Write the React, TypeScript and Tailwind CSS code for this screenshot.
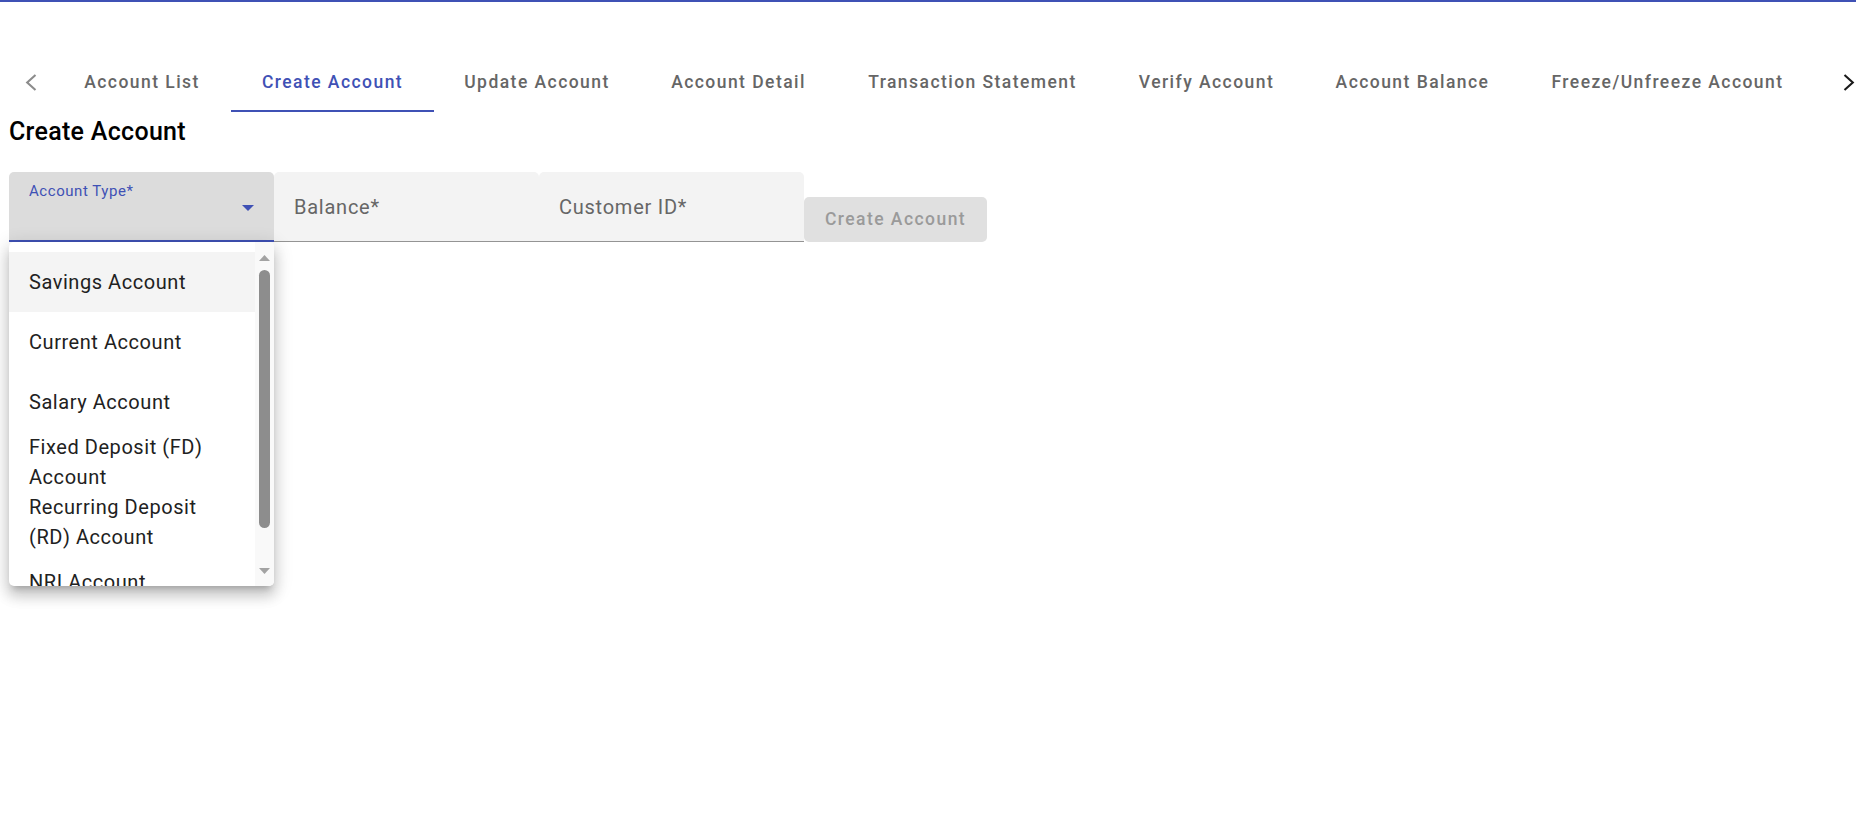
import React from "react";

const tabs = [
  { label: "Account List", cls: "w-[178px]" },
  { label: "Create Account", cls: "w-[203px]", active: true },
  { label: "Update Account", cls: "w-[206px]" },
  { label: "Account Detail", cls: "w-[197px]" },
  { label: "Transaction Statement", cls: "w-[271px]" },
  { label: "Verify Account", cls: "w-[197px]" },
  { label: "Account Balance", cls: "w-[215px]" },
  { label: "Freeze/Unfreeze Account", cls: "w-[295px]" },
];

const items: { lines: string[]; selected?: boolean }[] = [
  { lines: ["Savings Account"], selected: true },
  { lines: ["Current Account"] },
  { lines: ["Salary Account"] },
  { lines: ["Fixed Deposit (FD)", "Account"] },
  { lines: ["Recurring Deposit", "(RD) Account"] },
  { lines: ["NRI Account"] },
];

function Chevron({ dir, color }: { dir: "left" | "right"; color: string }) {
  const pts = dir === "left" ? "10.5,1 2.2,8.5 10.5,16" : "1.5,1 9.8,8.5 1.5,16";
  return (
    <svg width="12" height="17" viewBox="0 0 12 17" className="block">
      <polyline points={pts} fill="none" stroke={color} strokeWidth="2.1" />
    </svg>
  );
}

export default function App() {
  return (
    <div className="min-h-[835px] bg-white font-['Roboto',_sans-serif]">
      <div className="h-[2px] bg-[#3f51b5]" />

      {/* Tabs */}
      <div className="mt-[50px] flex h-[60px] items-stretch">
        <div className="flex w-[53px] items-center pl-[25px]">
          <Chevron dir="left" color="#8c8c8c" />
        </div>
        {tabs.map((t) => (
          <div
            key={t.label}
            className={`relative flex items-center justify-center ${t.cls}`}
          >
            <span
              className={`whitespace-nowrap text-[17.5px] font-medium leading-[21px] tracking-[1.45px] ${
                t.active ? "text-[#3f51b5]" : "text-[#666666]"
              }`}
            >
              {t.label}
            </span>
            {t.active && (
              <div className="absolute bottom-0 left-0 right-0 h-[2px] bg-[#3f51b5]" />
            )}
          </div>
        ))}
        <div className="flex flex-1 items-center pl-[28px]">
          <Chevron dir="right" color="#1a1a1a" />
        </div>
      </div>

      {/* Content */}
      <div className="pl-[9px]">
        <h6 className="text-[25px] font-medium leading-[40px] tracking-[0.3px] text-black">
          Create Account
        </h6>

        <div className="mt-[20px] flex items-end">
          {/* Account Type select */}
          <div className="relative w-[265px]">
            <div className="flex h-[70px] rounded-t-[5px] border-b-[2.5px] border-[#3f51b5] bg-[#dcdcdc]">
              <div className="pl-[20px] pt-[10px] text-[15px] leading-[18px] tracking-[0.55px] text-[#3f51b5]">
                Account Type*
              </div>
              <svg
                width="12"
                height="6"
                viewBox="0 0 12 6"
                className="ml-auto mr-[20px] mt-[33px] block"
              >
                <polygon points="0,0 12,0 6,6" fill="#3f51b5" />
              </svg>
            </div>

            {/* Dropdown menu */}
            <div className="absolute left-0 top-full z-10 flex h-[344px] w-[265px] overflow-hidden rounded-[5px] bg-white shadow-[0_6px_6px_-4px_rgba(0,0,0,0.2),0_10px_13px_1px_rgba(0,0,0,0.14),0_4px_18px_3px_rgba(0,0,0,0.12)]">
              <div className="flex-1 pt-[10px]">
                {items.map((it, i) => (
                  <div
                    key={i}
                    className={`flex h-[60px] shrink-0 items-center pl-[20px] ${
                      it.selected ? "bg-[#f4f4f4]" : ""
                    }`}
                  >
                    <div className="text-[20px] leading-[30px] tracking-[0.55px] text-[#212121]">
                      {it.lines.map((l, j) => (
                        <div key={j} className="whitespace-nowrap">
                          {l}
                        </div>
                      ))}
                    </div>
                  </div>
                ))}
              </div>
              {/* Scrollbar */}
              <div className="flex w-[19px] flex-col items-center bg-[#f9f9f9]">
                <div className="flex h-[28px] items-center justify-center pt-[4px]">
                  <svg width="11" height="6" viewBox="0 0 11 6" className="block">
                    <polygon points="5.5,0 11,6 0,6" fill="#a3a3a3" />
                  </svg>
                </div>
                <div className="h-[258px] w-[11px] rounded-full bg-[#8d8d8d]" />
                <div className="flex flex-1 flex-col items-center justify-end pb-[12px]">
                  <svg width="11" height="6" viewBox="0 0 11 6" className="block">
                    <polygon points="0,0 11,0 5.5,6" fill="#a3a3a3" />
                  </svg>
                </div>
              </div>
            </div>
          </div>

          {/* Balance */}
          <div className="flex h-[70px] w-[265px] items-center rounded-t-[5px] border-b-[1.25px] border-[#949494] bg-[#f3f3f3] pl-[20px]">
            <span className="text-[20px] leading-[24px] tracking-[0.75px] text-[#666666]">
              Balance*
            </span>
          </div>

          {/* Customer ID */}
          <div className="flex h-[70px] w-[265px] items-center rounded-t-[5px] border-b-[1.25px] border-[#949494] bg-[#f3f3f3] pl-[20px]">
            <span className="text-[20px] leading-[24px] tracking-[0.75px] text-[#666666]">
              Customer ID*
            </span>
          </div>

          <button className="h-[45px] w-[183px] rounded-[5px] bg-[#e0e0e0] text-[17.5px] font-medium leading-[21px] tracking-[1.45px] text-[#9a9a9a]">
            Create Account
          </button>
        </div>
      </div>
    </div>
  );
}
